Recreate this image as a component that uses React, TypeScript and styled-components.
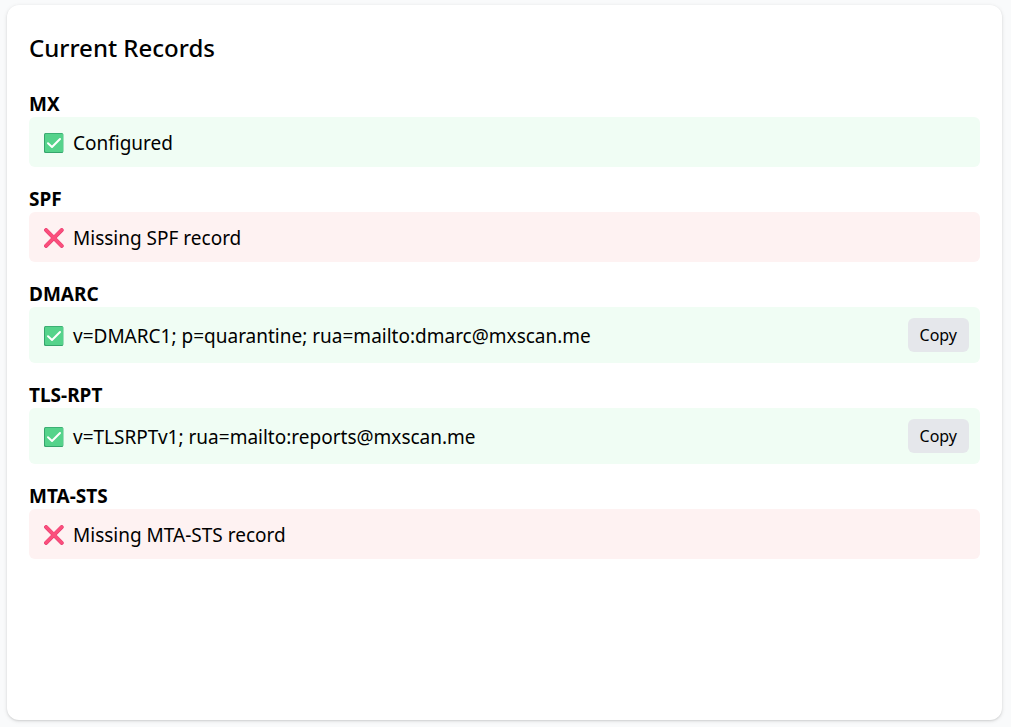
import React from "react";
import styled, { createGlobalStyle } from "styled-components";

const GlobalStyle = createGlobalStyle`
  * { box-sizing: border-box; }
  body {
    margin: 0;
    background: #f9fafb;
    color: #000;
    font-family: "Segoe UI", "Noto Sans", "Open Sans", sans-serif;
    font-size: 19px;
    line-height: 26px;
  }
`;

const Page = styled.main`
  display: flex;
  min-height: 100vh;
  padding: 5px 9px 7px 7px;
`;

const Card = styled.section`
  flex: 1;
  min-width: 0;
  padding: 22px;
  background: #fff;
  border-radius: 12px;
  box-shadow: 0 1px 4px rgba(0, 0, 0, 0.1), 0 1px 2px rgba(0, 0, 0, 0.1);
`;

const Title = styled.h2`
  margin: 0 0 24px;
  font-size: 24px;
  font-weight: 500;
  line-height: 41px;
`;

const RecordList = styled.div`
  display: flex;
  flex-direction: column;
  gap: 20px;
`;

const RecordName = styled.h3`
  margin: 0;
  font-size: 19px;
  font-weight: 700;
  line-height: 25px;
`;

const Status = styled.div<{ $ok: boolean }>`
  display: flex;
  align-items: center;
  justify-content: space-between;
  gap: 16px;
  min-height: 50px;
  padding: 11px 11px 11px 15px;
  border-radius: 6px;
  background: ${({ $ok }) => ($ok ? "#f0fdf4" : "#fef2f2")};
`;

const Value = styled.span`
  display: flex;
  align-items: center;
  gap: 9px;
  min-width: 0;
  padding-top: 2px;
  overflow-wrap: anywhere;

  svg { flex: none; }
`;

const CopyButton = styled.button`
  flex: none;
  padding: 4px 12px;
  border: 0;
  border-radius: 6px;
  background: #e5e7eb;
  color: #000;
  font-family: inherit;
  font-size: 16px;
  line-height: 26px;
  cursor: pointer;
`;

const CheckIcon = () => (
  <svg width="20" height="20" viewBox="0 0 20 20" role="img" aria-label="OK">
    <rect width="19.3" height="20" rx="1.5" fill="#35a56c" />
    <rect x="1" y="0.7" width="18.2" height="18.3" rx="1.2" fill="#55d38b" />
    <path d="M4 10.3 L8 14 L16 6" fill="none" stroke="#fff" strokeWidth="2" strokeLinecap="round" strokeLinejoin="round" />
  </svg>
);

const CrossIcon = () => (
  <svg width="20" height="20" viewBox="0 0 20 20" role="img" aria-label="Missing">
    <path d="M2.1 2.1 L17.7 17.9 M17.7 2.1 L2.1 17.9" stroke="#e5396f" strokeWidth="4" strokeLinecap="round" />
    <path d="M2.2 2 L17.6 17.6 M17.6 2 L2.2 17.6" stroke="#fb4f7c" strokeWidth="3.1" strokeLinecap="round" />
  </svg>
);

type DnsRecord = { name: string; ok: boolean; text: string; copy?: boolean };

const records: DnsRecord[] = [
  { name: "MX", ok: true, text: "Configured" },
  { name: "SPF", ok: false, text: "Missing SPF record" },
  { name: "DMARC", ok: true, text: "v=DMARC1; p=quarantine; rua=mailto:dmarc@mxscan.me", copy: true },
  { name: "TLS-RPT", ok: true, text: "v=TLSRPTv1; rua=mailto:reports@mxscan.me", copy: true },
  { name: "MTA-STS", ok: false, text: "Missing MTA-STS record" },
];

export default function App() {
  return (
    <>
      <GlobalStyle />
      <Page>
        <Card>
          <Title>Current Records</Title>
          <RecordList>
            {records.map((record) => (
              <div key={record.name}>
                <RecordName>{record.name}</RecordName>
                <Status $ok={record.ok}>
                  <Value>
                    {record.ok ? <CheckIcon /> : <CrossIcon />}
                    <span>{record.text}</span>
                  </Value>
                  {record.copy && (
                    <CopyButton type="button" onClick={() => navigator.clipboard?.writeText(record.text)}>
                      Copy
                    </CopyButton>
                  )}
                </Status>
              </div>
            ))}
          </RecordList>
        </Card>
      </Page>
    </>
  );
}
